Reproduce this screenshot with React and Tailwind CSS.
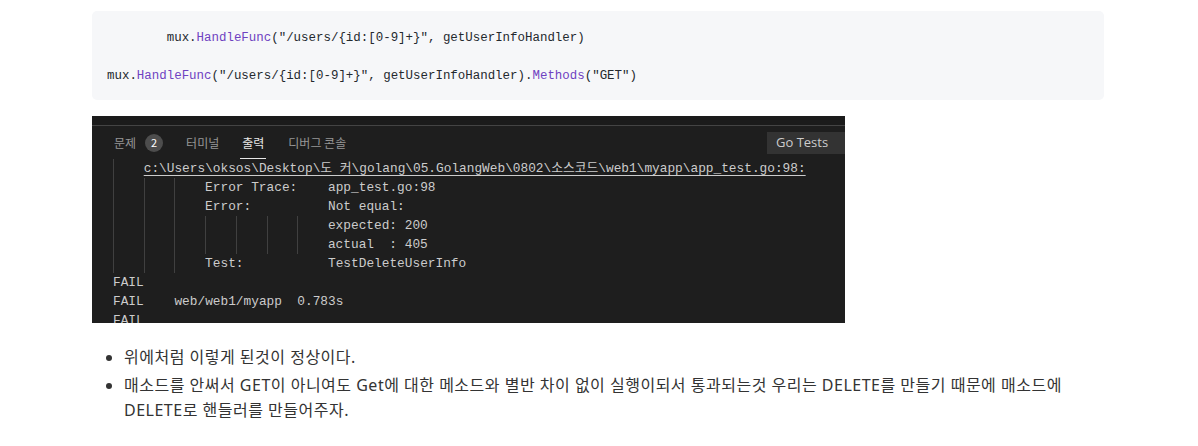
import React from "react";

const mono = { fontFamily: '"Liberation Mono", "Noto Sans CJK KR", monospace' };

// 터미널 한 줄: 들여쓰기 가이드 개수 + 텍스트
const Row = ({ guides = 0, children }) => (
  <div className="flex h-[19px] pl-[21px] whitespace-pre leading-[19px]">
    {Array.from({ length: guides }).map((_, i) => (
      <span key={i} className="w-[4ch] shrink-0 border-l border-[#404040]" />
    ))}
    <span>{children}</span>
  </div>
);

const Tab = ({ label, active, className = "" }) => (
  <div className={`relative flex h-full items-center ${className}`}>
    <span className={active ? "text-[#e7e7e7]" : "text-[#969696]"}>{label}</span>
    {active && <span className="absolute bottom-0 left-[-2px] right-[-2px] h-[1px] bg-[#e7e7e7]" />}
  </div>
);

const Terminal = () => (
  <div className="w-[753px] h-[207px] overflow-hidden bg-[#1e1e1e]">
    <div className="h-[10px] bg-[#1b1b1b] border-b border-[#444444]" />
    {/* 탭 바 */}
    <div
      className="flex h-[33px] items-center text-[12px]"
      style={{ fontFamily: '"Noto Sans CJK KR", "Noto Sans", sans-serif' }}
    >
      <Tab label="문제" className="ml-[22px]" />
      <div className="ml-[9px] flex h-[18px] w-[18px] items-center justify-center rounded-full bg-[#4d4d4d] text-[11px] text-white">
        2
      </div>
      <Tab label="터미널" className="ml-[23px]" />
      <Tab label="출력" active className="ml-[23px]" />
      <Tab label="디버그 콘솔" className="ml-[24px]" />
      <div
        className="ml-auto flex h-[22px] w-[78px] items-center bg-[#333333] pl-[9px] text-[13px] text-[#cccccc]"
        style={{ fontFamily: '"Open Sans", "Noto Sans", sans-serif' }}
      >
        Go Tests
      </div>
    </div>
    {/* 출력 내용 */}
    <div className="text-[12.8px] text-[#cccccc]" style={mono}>
      <Row guides={1}>
        <span className="underline underline-offset-[3px]">
          c:\Users\oksos\Desktop\도 커\golang\05.GolangWeb\0802\소스코드\web1\myapp\app_test.go:98:
        </span>
      </Row>
      <Row guides={3}>{"Error Trace:    app_test.go:98"}</Row>
      <Row guides={3}>{"Error:          Not equal:"}</Row>
      <Row guides={7}>expected: 200</Row>
      <Row guides={7}>{"actual  : 405"}</Row>
      <Row guides={3}>{"Test:           TestDeleteUserInfo"}</Row>
      <Row>FAIL</Row>
      <Row>{"FAIL    web/web1/myapp  0.783s"}</Row>
      <Row>FAIL</Row>
    </div>
  </div>
);

const Fn = ({ children }) => <span className="text-[#6f42c1]">{children}</span>;

const App = () => {
  return (
    <div className="w-[1198px] h-[446px] bg-white">
      <div className="ml-[92px] w-[1012px] pt-[11px]">
        {/* 코드 블록 */}
        <div
          className="rounded-[5px] bg-[#f6f7f9] px-[15px] pt-[18px] pb-[14px] text-[12.45px] leading-[19px] text-[#24292e] whitespace-pre"
          style={mono}
        >
          <div>
            {"        mux."}
            <Fn>HandleFunc</Fn>
            {'("/users/{id:[0-9]+}", getUserInfoHandler)'}
          </div>
          <div>{" "}</div>
          <div>
            {"mux."}
            <Fn>HandleFunc</Fn>
            {'("/users/{id:[0-9]+}", getUserInfoHandler).'}
            <Fn>Methods</Fn>
            {'("GET")'}
          </div>
        </div>

        <div className="mt-4">
          <Terminal />
        </div>

        {/* 설명 목록 */}
        <ul
          className="mt-[22px] flex flex-col gap-[3px] text-[16px] leading-[25px] tracking-[0.5px] text-[#333333]"
          style={{ fontFamily: '"Noto Sans", "Noto Sans CJK KR", sans-serif' }}
        >
          <li className="flex">
            <span className="mt-[10px] ml-[14px] h-[6px] w-[6px] shrink-0 rounded-full bg-[#333333]" />
            <span className="ml-[12px]">위에처럼 이렇게 된것이 정상이다.</span>
          </li>
          <li className="flex">
            <span className="mt-[10px] ml-[14px] h-[6px] w-[6px] shrink-0 rounded-full bg-[#333333]" />
            <span className="ml-[12px] w-[975px]">
              매소드를 안써서 GET이 아니여도 Get에 대한 메소드와 별반 차이 없이 실행이되서 통과되는것 우리는 DELETE를
              만들기 때문에 매소드에
              <br />
              DELETE로 핸들러를 만들어주자.
            </span>
          </li>
        </ul>
      </div>
    </div>
  );
};

export default App;
